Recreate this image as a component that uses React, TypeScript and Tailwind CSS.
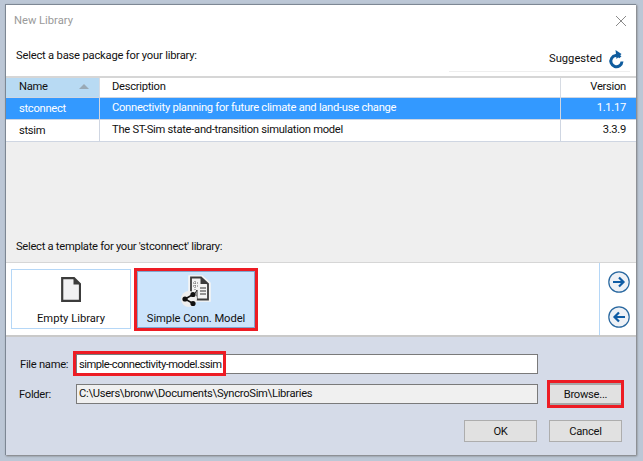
const font = { fontFamily: 'Roboto, sans-serif' };

const CloseIcon = () => (
  <svg width="12" height="12" viewBox="0 0 12 12" fill="none" stroke="#8a8a8a" strokeWidth="1">
    <path d="M1 1L11 11M11 1L1 11" />
  </svg>
);

const RefreshIcon = () => (
  <svg width="17" height="19" viewBox="0 0 17 19" fill="none">
    <path d="M12.4 7.2A5.6 5.6 0 1 0 14 11.5" stroke="#0f5c9e" strokeWidth="3" />
    <path d="M7.5 0L13.5 4L8.5 9Z" fill="#0f5c9e" />
  </svg>
);

const RoundArrow = ({ left }: { left?: boolean }) => (
  <svg width="22" height="22" viewBox="0 0 22 22" fill="none">
    <circle cx="11" cy="11" r="10.2" fill="#eef1f6" stroke="#28679f" strokeWidth="1.2" />
    <path
      d={left ? "M17 11H6.5M11 6.5L6.5 11L11 15.5" : "M5 11H15.5M11 6.5L15.5 11L11 15.5"}
      stroke="#0f5ca5"
      strokeWidth="2.2"
    />
  </svg>
);

const FileIcon = () => (
  <svg width="20" height="25" viewBox="0 0 20 25" fill="none">
    <path d="M1.2 1.2H13L19 7V23.8H1.2Z" fill="#f1f1f3" stroke="#3c3c3c" strokeWidth="2.2" />
    <path d="M12.5 1L12.5 7.5H19" fill="#3c3c3c" />
  </svg>
);

const ModelIcon = () => (
  <svg width="33" height="33" viewBox="0 0 33 33" fill="none">
    <path d="M9 1H22L30 8V26H9Z" fill="#f1f1f3" stroke="#f5f5f5" strokeWidth="1.5" />
    <path d="M11 2.5H21L28 9V24.5H11Z" fill="#f4f4f4" stroke="#3c3c3c" strokeWidth="1.8" />
    <path d="M20.5 2.5V9H28" fill="#3c3c3c" />
    <path d="M15 6V15M13 8H18M13 11H18" stroke="#666" strokeWidth="1" strokeDasharray="1 1" />
    <path d="M20 13H26M20 16H26M20 19H26" stroke="#333" strokeWidth="1" />
    <path d="M17 15L13.5 21H17M17 15V24" stroke="#333" strokeWidth="1" />
    <circle cx="9" cy="24" r="8" fill="#eeeeee" />
    <path d="M13 19.5L5 24L13 28.5" stroke="#111" strokeWidth="1.5" />
    <circle cx="13" cy="19.5" r="2.6" fill="#111" />
    <circle cx="5" cy="24" r="2.6" fill="#111" />
    <circle cx="13" cy="28.5" r="2.6" fill="#111" />
  </svg>
);

const packages = [
  { name: "stconnect", desc: "Connectivity planning for future climate and land-use change", version: "1.1.17", selected: true },
  { name: "stsim", desc: "The ST-Sim state-and-transition simulation model", version: "3.3.9", selected: false },
];

export default function App() {
  return (
    <div
      className="flex h-[461px] w-[643px] flex-col overflow-hidden bg-[#bcc7d6] pb-[6px] pl-[5px] pr-[7px] pt-[4px] text-[11.2px] leading-4 tracking-[-0.28px] text-[#111]"
      style={font}
    >
      <div className="flex flex-1 flex-col border-l border-t border-[#7d8794] bg-white shadow-[1px_1px_2px_#777]">
        <div className="flex h-[38px] items-start justify-between pl-[8px] pr-[9px] pt-[8px]">
          <span className="tracking-normal text-[#9a9a9a]">New Library</span>
          <span className="pt-[2px]">
            <CloseIcon />
          </span>
        </div>

        <div className="flex h-[33px] items-end justify-between pb-[4px] pl-[10px] pr-[6px]">
          <span className="mb-[8px] tracking-[-0.2px]">Select a base package for your library:</span>
          <span className="flex h-[25px] w-[181px] items-center justify-end gap-[6px] border-b border-[#eeeeee] pr-[5px] tracking-normal">
            Suggested
            <RefreshIcon />
          </span>
        </div>

        <div className="h-[159px] border-t-2 border-[#d6d6d6] bg-[#efefef]">
          <div className="flex h-[20px] border-b border-[#cfd6e2] bg-white">
            <div className="flex w-[93px] items-center justify-between bg-[#b8daf3] pb-[2px] pl-[13px] pr-[10px]">
              <span>Name</span>
              <span className="h-0 w-0 border-x-[5px] border-b-[5px] border-x-transparent border-b-[#9aa9b5]" />
            </div>
            <div className="flex-1 border-l border-[#d6dbe3] pl-[12px] pt-[1px]">Description</div>
            <div className="w-[76px] border-l border-[#d6dbe3] pr-[10px] pt-[1px] text-right">Version</div>
          </div>
          {packages.map((row) => (
            <div
              key={row.name}
              className={`flex h-[22px] items-center border-b border-[#cfd6e2] ${
                row.selected ? "bg-[#3399ff] text-white" : "bg-white"
              }`}
            >
              <div className="w-[93px] pl-[13px]">{row.name}</div>
              <div className="h-full flex-1 border-l border-[#cfd6e2] pl-[12px] pt-[2px]">{row.desc}</div>
              <div className="h-full w-[76px] border-l border-[#cfd6e2] pr-[10px] pt-[2px] text-right">{row.version}</div>
            </div>
          ))}
        </div>

        <div className="flex h-[28px] items-center border-b border-[#d6d6d6] bg-[#efefef] pb-[3px] pl-[10px]">
          Select a template for your 'stconnect' library:
        </div>

        <div className="flex h-[72px] bg-white">
          <div className="flex flex-1 items-center gap-[3px] pl-[5px]">
            <div className="flex h-[60px] w-[120px] flex-col items-center justify-end border border-[#b5d7f7] pb-[1px] tracking-normal">
              <FileIcon />
              <span className="mt-[9px]">Empty Library</span>
            </div>
            <div className="border-[3px] border-[#ed1c24]">
              <div className="flex h-[57px] w-[118px] flex-col items-center justify-end border border-[#7fa6cf] bg-[#cce4fb] tracking-[-0.08px]">
                <ModelIcon />
                <span className="mt-[3px]">Simple Conn. Model</span>
              </div>
            </div>
          </div>
          <div className="flex w-[37px] flex-col items-center gap-[13px] border-l border-[#b5d7f7] pl-[2px] pt-[8px]">
            <RoundArrow />
            <RoundArrow left />
          </div>
        </div>

        <div className="flex flex-1 flex-col border-t-2 border-[#c9c9c9] bg-[#d5dbe8] pl-[13px] pr-[12px]">
          <div className="mt-[17px] flex h-[20px] items-center">
            <span className="w-[57px] shrink-0 whitespace-nowrap pl-[1px] pt-[2px]">File name:</span>
            <div className="relative h-[20px] w-[462px] border border-[#7a7a7a] bg-white pl-[2px] pt-[2px] tracking-[-0.5px]">
              simple-connectivity-model.ssim
              <span className="absolute left-[-4px] top-[-4px] h-[25px] w-[153px] border-[3px] border-[#ed1c24]" />
            </div>
          </div>
          <div className="mt-[10px] flex h-[20px] items-center">
            <span className="w-[57px] shrink-0 pt-[1px]">Folder:</span>
            <div className="h-[20px] w-[462px] border border-[#7a7a7a] bg-[#f0f0f0] pl-[2px] pt-[1px]">
              C:\Users\bronw\Documents\SyncroSim\Libraries
            </div>
            <div className="ml-[9px] border-[3px] border-[#ed1c24]">
              <button className="block h-[22px] w-[71px] border-y-2 border-[#a8a8a8] bg-[#e1e1e1] pt-[1px]">Browse...</button>
            </div>
          </div>
          <div className="mt-[16px] flex justify-end gap-[12px]">
            <button className="h-[22px] w-[73px] border border-[#adadad] bg-[#e1e1e1] pt-[1px]">OK</button>
            <button className="mr-[2px] h-[22px] w-[73px] border border-[#adadad] bg-[#e1e1e1] pt-[1px]">Cancel</button>
          </div>
        </div>
      </div>
    </div>
  );
}
